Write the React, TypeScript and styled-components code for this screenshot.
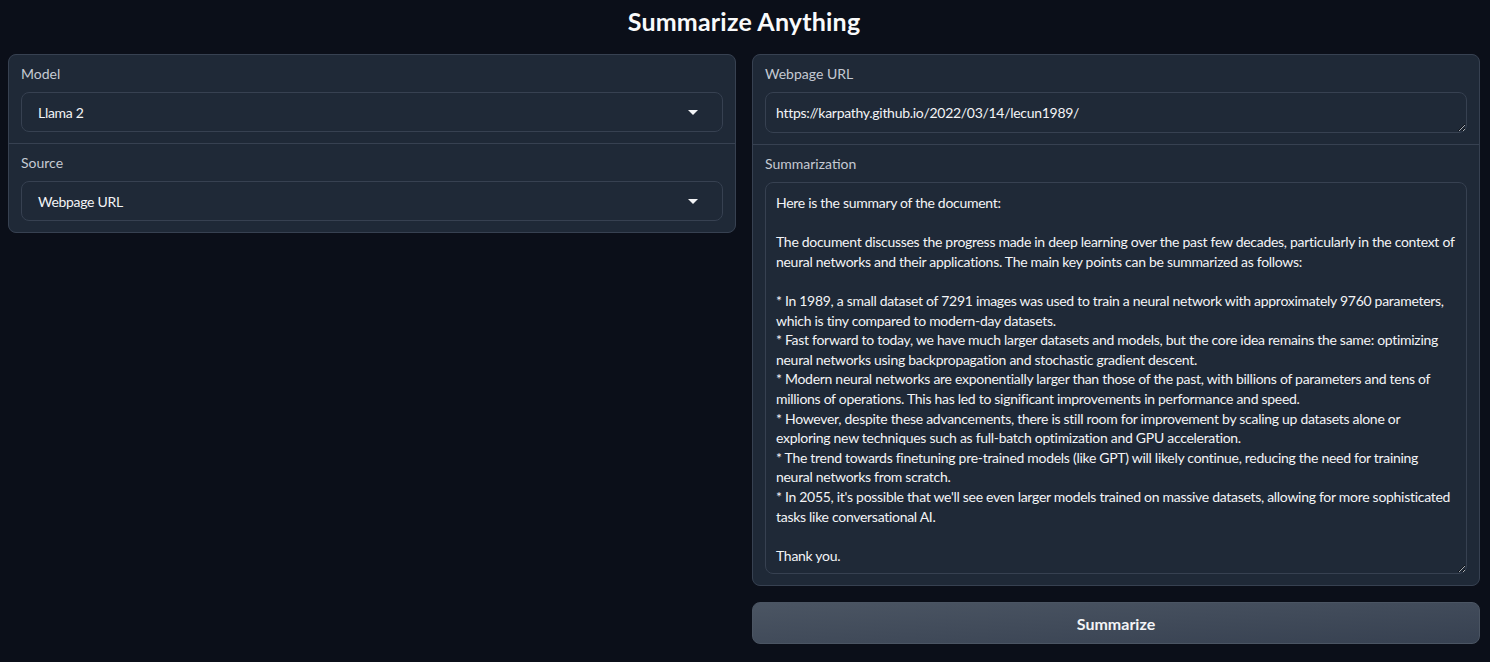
import React from "react";
import styled, { createGlobalStyle } from "styled-components";

const Global = createGlobalStyle`
  html, body { margin: 0; padding: 0; background: #0b0f19; }
  body { font-family: Lato, "Noto Sans", sans-serif; color: #f3f4f6; }
  * { box-sizing: border-box; }
`;

const Page = styled.div`
  width: 1490px;
  height: 662px;
  padding: 0 10px 0 8px;
  background: #0b0f19;
  display: flex;
  flex-direction: column;
`;

const Title = styled.h1`
  margin: 0;
  height: 54px;
  display: flex;
  align-items: center;
  justify-content: center;
  padding-bottom: 12px;
  font-size: 25px;
  font-weight: 700;
  letter-spacing: 0.2px;
  color: #f9fafb;
`;

const Columns = styled.div`
  display: grid;
  grid-template-columns: 1fr 1fr;
  gap: 16px;
  align-items: start;
`;

const Column = styled.div`
  display: flex;
  flex-direction: column;
  gap: 16px;
`;

const Panel = styled.div`
  display: flex;
  flex-direction: column;
  gap: 1px;
  background: #374151;
  border: 1px solid #374151;
  border-radius: 8px;
  overflow: hidden;
`;

const Block = styled.div`
  background: #1f2937;
  padding: 9px 12px 11px;
  display: flex;
  flex-direction: column;
  gap: 8px;
`;

const Label = styled.span`
  font-size: 14px;
  line-height: 20px;
  color: #c5cad3;
`;

const Select = styled.div`
  height: 40px;
  border: 1px solid #374151;
  border-radius: 8px;
  background: #1f2937;
  display: flex;
  align-items: center;
  justify-content: space-between;
  padding: 0 24px 0 16px;
  font-size: 14px;
  letter-spacing: -0.3px;
  color: #f3f4f6;
`;

const Caret = styled.span`
  width: 0;
  height: 0;
  border-left: 5px solid transparent;
  border-right: 5px solid transparent;
  border-top: 5px solid #f3f4f6;
`;

const TextArea = styled.textarea<{ $h: number }>`
  display: block;
  width: 100%;
  height: ${(p) => p.$h}px;
  border: 1px solid #374151;
  border-radius: 8px;
  background: #1f2937;
  color: #f3f4f6;
  font-family: Lato, "Noto Sans", sans-serif;
  font-size: 14px;
  letter-spacing: -0.29px;
  line-height: 1.4;
  padding: 10px;
  outline: none;
  resize: vertical;
  margin: 0;
  overflow: hidden;
  color-scheme: dark;
`;

const Button = styled.button`
  height: 42px;
  border: 1px solid #4b5563;
  border-radius: 8px;
  background: linear-gradient(to bottom right, #4b5563, #374151);
  color: #f3f4f6;
  font-family: Lato, "Noto Sans", sans-serif;
  font-size: 16px;
  font-weight: 700;
  cursor: pointer;
`;

const summary = `Here is the summary of the document:

The document discusses the progress made in deep learning over the past few decades, particularly in the context of neural networks and their applications. The main key points can be summarized as follows:

* In 1989, a small dataset of 7291 images was used to train a neural network with approximately 9760 parameters, which is tiny compared to modern-day datasets.
* Fast forward to today, we have much larger datasets and models, but the core idea remains the same: optimizing neural networks using backpropagation and stochastic gradient descent.
* Modern neural networks are exponentially larger than those of the past, with billions of parameters and tens of millions of operations. This has led to significant improvements in performance and speed.
* However, despite these advancements, there is still room for improvement by scaling up datasets alone or exploring new techniques such as full-batch optimization and GPU acceleration.
* The trend towards finetuning pre-trained models (like GPT) will likely continue, reducing the need for training neural networks from scratch.
* In 2055, it's possible that we'll see even larger models trained on massive datasets, allowing for more sophisticated tasks like conversational AI.

Thank you.`;

export default function App() {
  return (
    <Page>
      <Global />
      <Title>Summarize Anything</Title>
      <Columns>
        <Column>
          <Panel>
            <Block>
              <Label>Model</Label>
              <Select>
                <span>Llama 2</span>
                <Caret />
              </Select>
            </Block>
            <Block>
              <Label>Source</Label>
              <Select>
                <span>Webpage URL</span>
                <Caret />
              </Select>
            </Block>
          </Panel>
        </Column>
        <Column>
          <Panel>
            <Block>
              <Label>Webpage URL</Label>
              <TextArea $h={41} readOnly rows={1} defaultValue="https://karpathy.github.io/2022/03/14/lecun1989/" />
            </Block>
            <Block>
              <Label>Summarization</Label>
              <TextArea $h={392} readOnly defaultValue={summary} />
            </Block>
          </Panel>
          <Button>Summarize</Button>
        </Column>
      </Columns>
    </Page>
  );
}
